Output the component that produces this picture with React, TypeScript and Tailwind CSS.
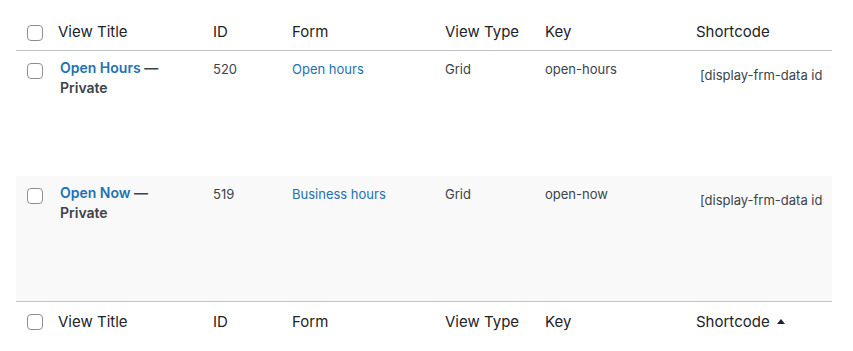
import React from "react";

const cols = "grid grid-cols-[34px_155px_79px_153px_100px_151px_144px]";

function Box() {
  return <div className="w-4 h-4 rounded-[4px] border border-[#8c8f94] bg-white" />;
}

function HeaderRow({ footer }: { footer?: boolean }) {
  const th = "pl-2 text-[15px] leading-5 text-[#1d2327]";
  return (
    <div
      className={`${cols} items-start ${footer ? "h-[49px] pt-[10px]" : "h-[51px] pt-[22px] border-b border-[#c3c4c7]"}`}
    >
      <div className={`pl-[11px] ${footer ? "pt-[2px]" : "pt-[3px]"}`}>
        <Box />
      </div>
      <div className={th}>View Title</div>
      <div className={th}>ID</div>
      <div className={th}>Form</div>
      <div className={th}>View Type</div>
      <div className={th}>Key</div>
      <div className={`${th} flex items-center gap-[7px]`}>
        <span>Shortcode</span>
        {footer && (
          <svg width="8" height="5" viewBox="0 0 8 5" className="mt-[-2px]">
            <polygon points="4,0 8,5 0,5" fill="#1d2327" />
          </svg>
        )}
      </div>
    </div>
  );
}

function Row({
  title,
  id,
  form,
  keyName,
  alt,
}: {
  title: string;
  id: string;
  form: string;
  keyName: string;
  alt?: boolean;
}) {
  const td = "pl-2 pt-[8px] text-[13px] leading-5 text-[#3c434a]";
  return (
    <div className={`${cols} ${alt ? "bg-[#f9f9f9] border-b border-[#c3c4c7] h-[126px]" : "h-[125px]"}`}>
      <div className="pl-[11px] pt-[12px]">
        <Box />
      </div>
      <div className="pl-[10px] pt-[7px] text-[14px] leading-5 font-semibold text-[#3c434a]">
        <span className="text-[#2271b1]">{title}</span> —<br />
        Private
      </div>
      <div className={td}>{id}</div>
      <div className={`${td} text-[#2271b1]`}>{form}</div>
      <div className={td}>Grid</div>
      <div className={td}>{keyName}</div>
      <div className="pl-2 pt-[9px]">
        <input
          readOnly
          value={`[display-frm-data id=${id} filter=limited]`}
          className="w-[136px] h-[30px] pl-[4px] pr-[8px] bg-transparent border-0 outline-none text-[13px] text-[#3c434a]"
          style={{ fontFamily: "Inter, 'Liberation Sans', sans-serif" }}
        />
      </div>
    </div>
  );
}

export default function App() {
  return (
    <div
      className="w-[853px] h-[351px] bg-white overflow-hidden"
      style={{ fontFamily: "Inter, 'Liberation Sans', sans-serif" }}
    >
      <div className="ml-4 w-[816px]">
        <HeaderRow />
        <Row title="Open Hours" id="520" form="Open hours" keyName="open-hours" />
        <Row title="Open Now" id="519" form="Business hours" keyName="open-now" alt />
        <HeaderRow footer />
      </div>
    </div>
  );
}
